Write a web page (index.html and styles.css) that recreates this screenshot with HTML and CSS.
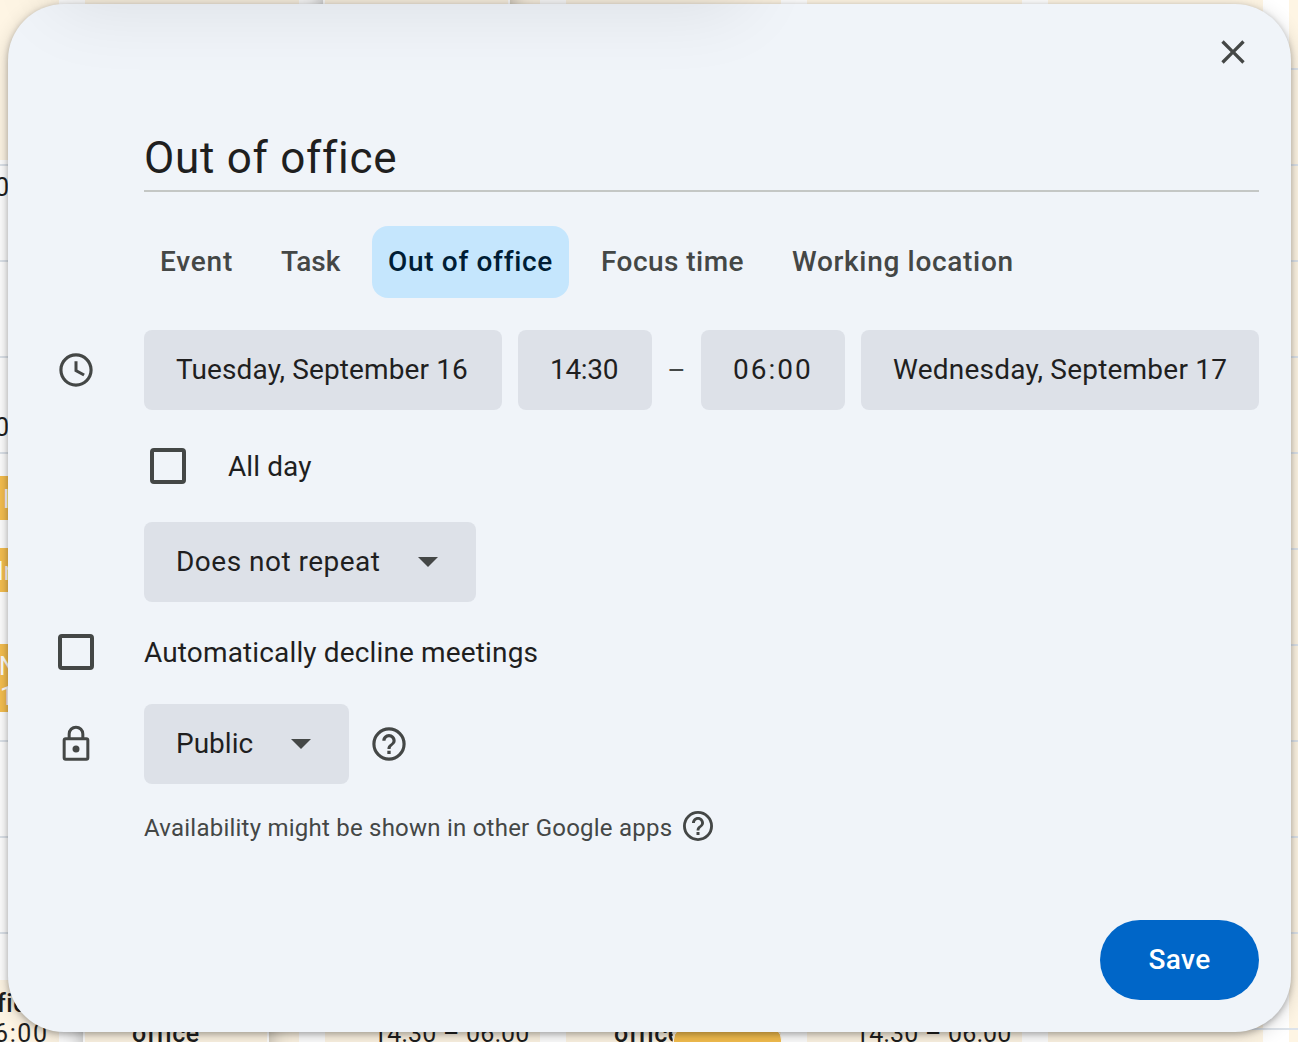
FILE: index.html
```html
<!DOCTYPE html>
<html lang="en">
<head>
<meta charset="utf-8">
<title>Out of office</title>
<link rel="stylesheet" href="styles.css">
</head>
<body>
<div class="calendar" aria-hidden="true">
  <div class="column first"></div>
  <div class="column"></div>
  <div class="column"></div>
  <div class="column"></div>
  <div class="column"></div>
  <div class="column"></div>
  <div class="column"></div>
  <div class="event raised top"></div>
  <div class="event raised bottom"></div>
  <div class="event gold e1"></div>
  <div class="event gold e2"></div>
  <div class="event gold e3"></div>
  <div class="event gold e4"></div>
  <span class="label l1">0</span>
  <span class="label l2">0</span>
  <span class="label light l3">I</span>
  <span class="label light l4">In</span>
  <span class="label light l5">N</span>
  <span class="label light l6">1</span>
  <span class="label bold l7">fic</span>
  <span class="label l8">6:00</span>
  <span class="label bold l9">office</span>
  <span class="label l10">14:30 – 06:00</span>
  <span class="label bold l11">office</span>
  <span class="label l12">14:30 – 06:00</span>
</div>

<main class="dialog">
  <header class="top-bar">
    <button class="close" aria-label="Close"><svg class="icon" viewBox="0 0 24 24"><path d="M19 6.41 17.59 5 12 10.59 6.41 5 5 6.41 10.59 12 5 17.59 6.41 19 12 13.41 17.59 19 19 17.59 13.41 12z"/></svg></button>
  </header>
  <h1 class="title">Out of office</h1>
  <nav class="tabs">
    <button class="tab tab-event">Event</button>
    <button class="tab tab-task">Task</button>
    <button class="tab tab-office active">Out of office</button>
    <button class="tab tab-focus">Focus time</button>
    <button class="tab tab-location">Working location</button>
  </nav>
  <section class="row row-time">
    <svg class="icon" viewBox="0 0 24 24"><path d="M11.99 2C6.47 2 2 6.48 2 12s4.47 10 9.99 10C17.52 22 22 17.52 22 12S17.52 2 11.99 2zM12 20.1c-4.470 0-8.100-3.630-8.100-8.100S7.530 3.900 12 3.900s8.100 3.630 8.100 8.100-3.630 8.100-8.100 8.100zM12.900 6.700h-1.800v6.250l5.300 2.850.9-1.550-4.400-2.350z"/></svg>
    <div class="times">
      <button class="chip date-start">Tuesday, September 16</button>
      <button class="chip time-start">14:30</button>
      <span class="dash">–</span>
      <button class="chip time-end">06:00</button>
      <button class="chip date-end">Wednesday, September 17</button>
    </div>
  </section>
  <label class="all-day"><i class="box"></i><span>All day</span></label>
  <button class="chip select repeat"><span>Does not repeat</span><svg class="arrow" viewBox="0 0 20 10"><path d="M0 0h20L10 10z"/></svg></button>
  <label class="row row-decline"><i class="box"></i><span>Automatically decline meetings</span></label>
  <section class="row row-visibility">
    <svg class="icon" viewBox="0 0 24 24"><path d="M18.200 8H17V6A5 5 0 0 0 7 6v2H5.800A1.800 1.800 0 0 0 4 9.800v10.400A1.800 1.800 0 0 0 5.800 22h12.400a1.800 1.800 0 0 0 1.800-1.800V9.800A1.800 1.800 0 0 0 18.200 8zM8.800 6a3.200 3.200 0 0 1 6.400 0v2H8.800zM18.200 20.200H5.800V9.800h12.400zM12 17.100a2.100 2.100 0 1 0 0-4.200 2.100 2.100 0 0 0 0 4.200z"/></svg>
    <button class="chip select public"><span>Public</span><svg class="arrow" viewBox="0 0 20 10"><path d="M0 0h20L10 10z"/></svg></button>
    <svg class="icon help" viewBox="0 0 24 24"><path d="M11 18h2v-2h-2zM12 2a10 10 0 1 0 0 20 10 10 0 0 0 0-20zm0 18.100a8.100 8.100 0 1 1 0-16.200 8.100 8.100 0 0 1 0 16.200zM12 6c-2.210 0-4 1.790-4 4h1.900c0-1.150.95-2.100 2.100-2.100s2.100.95 2.100 2.100c0 2-3.050 1.800-3.050 5h1.900c0-2.250 3.050-2.500 3.050-5 0-2.210-1.790-4-4-4z"/></svg>
  </section>
  <p class="note"><span>Availability might be shown in other Google apps</span><svg class="icon small" viewBox="0 0 24 24"><path d="M11 18h2v-2h-2zM12 2a10 10 0 1 0 0 20 10 10 0 0 0 0-20zm0 18.100a8.100 8.100 0 1 1 0-16.200 8.100 8.100 0 0 1 0 16.200zM12 6c-2.210 0-4 1.790-4 4h1.900c0-1.150.95-2.100 2.100-2.100s2.100.95 2.100 2.100c0 2-3.050 1.800-3.050 5h1.900c0-2.250 3.050-2.500 3.050-5 0-2.210-1.790-4-4-4z"/></svg></p>
  <footer class="actions"><button class="save">Save</button></footer>
</main>
<div class="cast" aria-hidden="true"></div>
</body>
</html>
```
FILE: styles.css
```css
* { box-sizing: border-box; }
body {
  margin: 0;
  width: 1298px;
  height: 1042px;
  overflow: hidden;
  position: relative;
  padding: 4px 7px 10px 8px;
  background: #fff;
  font-family: Roboto, "Open Sans", sans-serif;
  font-size: 28px;
  color: #1f1f1f;
}
button { border: 0; margin: 0; padding: 0; font: inherit; color: inherit; background: none; white-space: nowrap; }
span { white-space: nowrap; }

.calendar {
  position: absolute;
  inset: 0;
  overflow: hidden;
  display: grid;
  grid-template-columns: 59px 214px repeat(5, 215px);
  column-gap: 26px;
  background: repeating-linear-gradient(to bottom, transparent 0 68px, #dde3ea 68px 70px, transparent 70px 96px) #fff;
}
.column {
  background: repeating-linear-gradient(to bottom, transparent 0 68px, #dde3ea 68px 70px, transparent 70px 96px) #fef5e4;
}
.column.first {
  background: linear-gradient(#fef5e4 0 160px, transparent 160px 980px, #fef5e4 980px);
}
.event, .label { position: absolute; }
.raised {
  width: 187px;
  background: #fef5e4;
  border: 2px solid #fff;
  box-shadow: 0 4px 20px rgba(0, 0, 0, .3);
}
.raised.top { left: 323px; top: -60px; height: 100px; }
.raised.bottom { left: 83px; top: 950px; height: 160px; width: 186px; }
.gold { left: -20px; width: 60px; background: #f6bf4f; }
.e1 { top: 476px; height: 44px; }
.e2 { top: 548px; height: 44px; }
.e3 { top: 644px; height: 68px; }
.gold.e4 { left: 673px; top: 1026px; width: 109px; height: 40px; border-radius: 14px; border: 1px solid #fff; }
.label { font-size: 25px; line-height: 30px; }
.light { color: #fff; }
.bold { font-weight: 500; letter-spacing: .5px; }
.l1 { left: -5px; top: 173px; }
.l2 { left: -5px; top: 413px; }
.l3 { left: 3px; top: 485px; }
.l4 { left: -3px; top: 557px; }
.l5 { left: -1px; top: 652px; }
.l6 { left: 0; top: 682px; }
.l7 { left: -3px; top: 989px; }
.l8 { left: -6px; top: 1019px; letter-spacing: 1.6px; }
.l9 { left: 132px; top: 1019px; }
.l10 { left: 373px; top: 1019px; letter-spacing: .25px; }
.l11 { left: 614px; top: 1019px; clip-path: inset(0 9px 0 0); }
.l12 { left: 855px; top: 1019px; letter-spacing: .25px; }

.dialog {
  position: relative;
  display: flex;
  flex-direction: column;
  align-items: flex-start;
  height: 1028px;
  padding: 28px 32px 32px 136px;
  border-radius: 56px;
  background: #f0f4f9;
  box-shadow: 0 2px 6px rgba(0, 0, 0, .28), 0 4px 20px rgba(0, 0, 0, .16);
}
.cast {
  position: absolute;
  left: 60px;
  top: -100px;
  width: 680px;
  height: 100px;
  border-radius: 16px;
  box-shadow: 0 4px 72px 6px rgba(0, 0, 0, .085);
}
.icon { display: block; width: 40px; height: 40px; fill: #444746; flex: none; }
.top-bar { align-self: flex-end; height: 40px; padding-right: 6px; }
.title {
  align-self: stretch;
  margin: 52px 0 0;
  height: 68px;
  border-bottom: 2px solid #c4c7c5;
  font-size: 44px;
  font-weight: 400;
  line-height: 69px;
  letter-spacing: .72px;
}
.tabs { display: flex; gap: 16px; margin-top: 34px; height: 72px; }
.tab {
  border-radius: 16px;
  text-align: left;
  padding: 0 0 2px 16px;
  font-weight: 500;
  color: #444746;
}
.tab-event { width: 105px; letter-spacing: .8px; }
.tab-task { width: 91px; }
.tab-office { width: 197px; letter-spacing: .67px; }
.tab-focus { width: 175px; letter-spacing: .45px; }
.tab-location { width: 253px; letter-spacing: .68px; }
.tab.active { background: #c5e6fd; color: #001d35; }

.row { display: flex; align-items: center; margin-left: -88px; }
.row > :first-child { margin-right: 48px; }
.row-time { margin-top: 32px; height: 80px; }
.times { display: flex; align-items: center; }
.chip {
  height: 80px;
  border-radius: 8px;
  background: #dde1e8;
  text-align: left;
  padding: 0 0 2px 32px;
}
.date-start { width: 358px; margin-right: 16px; letter-spacing: .12px; }
.time-start { width: 134px; letter-spacing: -.3px; }
.dash { width: 49px; text-align: center; color: #444746; }
.time-end { width: 144px; margin-right: 16px; letter-spacing: 2px; }
.date-end { width: 398px; letter-spacing: .22px; }

.box { display: block; width: 36px; height: 36px; border: 4px solid #444746; border-radius: 4px; flex: none; }
.all-day { display: flex; align-items: center; gap: 42px; height: 36px; margin: 38px 0 38px 6px; letter-spacing: .1px; }
.select { display: flex; align-items: center; justify-content: space-between; padding-right: 38px; }
.arrow { width: 20px; height: 10px; fill: #444746; margin-top: 2px; }
.repeat { width: 332px; letter-spacing: .48px; }
.row-decline { height: 36px; margin: 32px 0 34px -86px; letter-spacing: .14px; }
.row-decline > .box { margin-right: 50px; }
.public { width: 205px; }
.help { margin-left: 20px; }
.note {
  display: flex;
  align-items: center;
  gap: 8px;
  margin: 24px 0 0;
  height: 36px;
  font-size: 24px;
  letter-spacing: .23px;
  color: #444746;
}
.note span { padding-top: 3px; }
.small { width: 36px; height: 36px; }
.actions { align-self: flex-end; margin-top: auto; }
.save {
  display: block;
  width: 159px;
  height: 80px;
  padding-bottom: 2px;
  border-radius: 40px;
  background: #0066c8;
  color: #fff;
  font-weight: 500;
  letter-spacing: .4px;
}
```
